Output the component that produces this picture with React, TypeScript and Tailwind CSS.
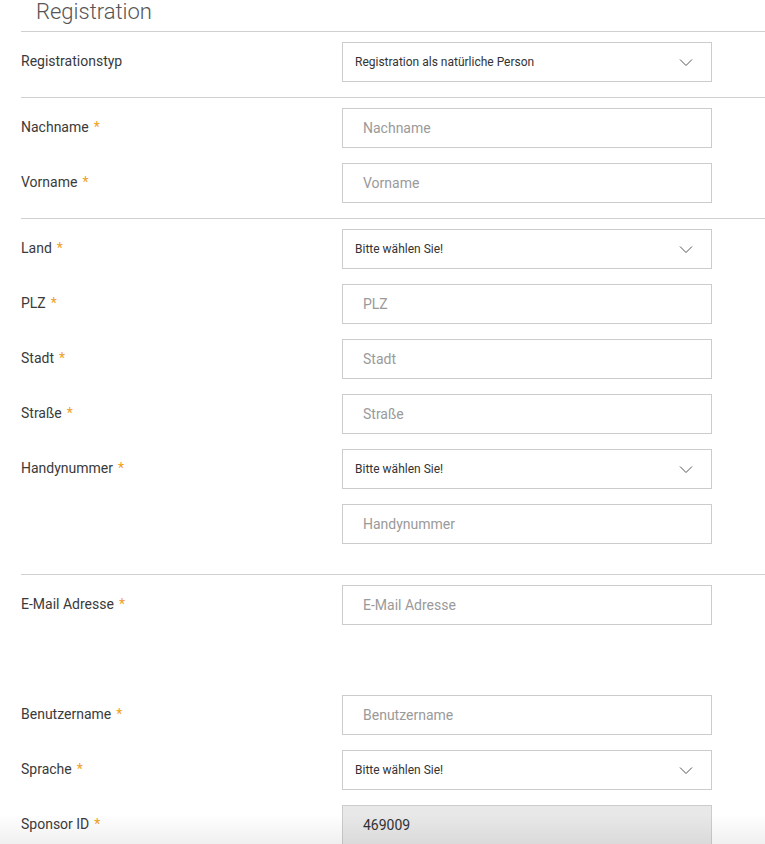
import React from 'react'

type Field = {
  label: string
  required?: boolean
  controls: Control[]
}

type Control =
  | { kind: 'select'; value: string }
  | { kind: 'input'; placeholder: string }
  | { kind: 'readonly'; value: string }

const font = { fontFamily: 'Roboto, "Noto Sans", sans-serif' }

// ─── Controls ────────────────────────────────────────────────────────────────
const Chevron = () => (
  <svg width="14" height="9" viewBox="0 0 14 9" fill="none" className="shrink-0">
    <polyline points="1,1.5 7,7.5 13,1.5" stroke="#555" strokeWidth="1" />
  </svg>
)

const ControlBox: React.FC<{ control: Control }> = ({ control }) => {
  if (control.kind === 'select') {
    return (
      <div className="h-[40px] w-[370px] border border-[#cccccc] bg-white flex items-center justify-between pl-[12px] pr-[18px]">
        <span className="text-[12px] text-[#333]">{control.value}</span>
        <Chevron />
      </div>
    )
  }
  if (control.kind === 'readonly') {
    return (
      <div className="h-[40px] w-[370px] border border-[#cccccc] bg-[#e8e8e8] flex items-center pl-[20px]">
        <span className="text-[14px] text-[#333]">{control.value}</span>
      </div>
    )
  }
  return (
    <div className="h-[40px] w-[370px] border border-[#cccccc] bg-white flex items-center pl-[20px]">
      <span className="text-[14px] text-[#9a9a9a]">{control.placeholder}</span>
    </div>
  )
}

const Row: React.FC<{ field: Field }> = ({ field }) => (
  <div className="flex">
    <div className="w-[321px] h-[38px] flex items-center text-[14px] text-[#3a3a3a]">
      <span>{field.label}</span>
      {field.required && <span className="ml-[5px] text-[#f0a01e]">*</span>}
    </div>
    <div className="flex flex-col gap-[15px]">
      {field.controls.map((c, i) => (
        <ControlBox key={i} control={c} />
      ))}
    </div>
  </div>
)

const Section: React.FC<{ fields: Field[]; className?: string }> = ({ fields, className }) => (
  <div className={`border-t border-[#d0d0d0] pt-[10px] flex flex-col gap-[15px] ${className ?? ''}`}>
    {fields.map((f) => (
      <Row key={f.label} field={f} />
    ))}
  </div>
)

// ─── Page ─────────────────────────────────────────────────────────────────────
export default function App() {
  return (
    <div className="relative min-h-[844px] bg-white overflow-hidden" style={font}>
      <div className="pl-[21px]">
        <div className="h-[31px] pl-[15px]">
          <h1 className="text-[22px] leading-[24px] font-light text-[#555]">Registration</h1>
        </div>

        <Section
          className="pb-[15px]"
          fields={[{ label: 'Registrationstyp', controls: [{ kind: 'select', value: 'Registration als natürliche Person' }] }]}
        />
        <Section
          className="pb-[15px]"
          fields={[
            { label: 'Nachname', required: true, controls: [{ kind: 'input', placeholder: 'Nachname' }] },
            { label: 'Vorname', required: true, controls: [{ kind: 'input', placeholder: 'Vorname' }] },
          ]}
        />
        <Section
          className="pb-[30px]"
          fields={[
            { label: 'Land', required: true, controls: [{ kind: 'select', value: 'Bitte wählen Sie!' }] },
            { label: 'PLZ', required: true, controls: [{ kind: 'input', placeholder: 'PLZ' }] },
            { label: 'Stadt', required: true, controls: [{ kind: 'input', placeholder: 'Stadt' }] },
            { label: 'Straße', required: true, controls: [{ kind: 'input', placeholder: 'Straße' }] },
            {
              label: 'Handynummer',
              required: true,
              controls: [
                { kind: 'select', value: 'Bitte wählen Sie!' },
                { kind: 'input', placeholder: 'Handynummer' },
              ],
            },
          ]}
        />
        <Section
          className="pb-[70px]"
          fields={[{ label: 'E-Mail Adresse', required: true, controls: [{ kind: 'input', placeholder: 'E-Mail Adresse' }] }]}
        />
        <div className="flex flex-col gap-[15px]">
          <Row field={{ label: 'Benutzername', required: true, controls: [{ kind: 'input', placeholder: 'Benutzername' }] }} />
          <Row field={{ label: 'Sprache', required: true, controls: [{ kind: 'select', value: 'Bitte wählen Sie!' }] }} />
          <Row field={{ label: 'Sponsor ID', required: true, controls: [{ kind: 'readonly', value: '469009' }] }} />
        </div>
      </div>

      {/* bottom fade */}
      <div className="pointer-events-none absolute left-0 right-0 top-[814px] h-[30px] bg-gradient-to-t from-black/[0.06] to-transparent" />
    </div>
  )
}
